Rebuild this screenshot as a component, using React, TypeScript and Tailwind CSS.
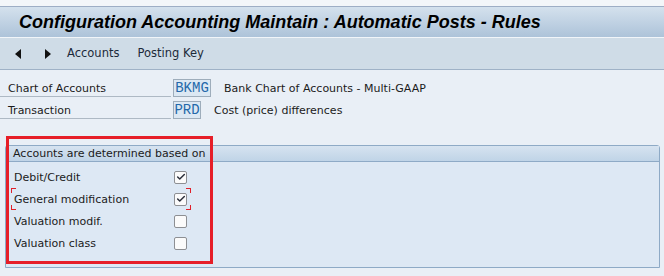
import { Check } from 'lucide-react'

const font = 'font-["DejaVu_Sans",Verdana,sans-serif]'

function Checkbox({ checked }: { checked: boolean }) {
  return (
    <div className="flex h-[13px] w-[13px] items-center justify-center rounded-[2px] border border-[#8d8f93] bg-[#fbfbfb]">
      {checked && <Check className="h-[10px] w-[10px] text-[#2b2f3a]" strokeWidth={3.5} />}
    </div>
  )
}

function FieldRow({ label, value, width, text }: { label: string; value: string; width: string; text: string }) {
  return (
    <div className="flex h-[18px] items-stretch">
      <div className="flex w-[171px] items-center border-b border-[#aeb9c4] pl-[8px] pt-[3px] text-[11px] text-[#1b1b1b]">
        {label}
      </div>
      <div
        className={`ml-[2px] flex items-center justify-center border border-[#9eadbb] bg-[#dce8f3] font-["Liberation_Mono",monospace] text-[14px] text-[#2468aa] ${width}`}
      >
        {value}
      </div>
      <div className="ml-[13px] flex items-center pt-[2px] text-[11px] text-[#1b1b1b]">{text}</div>
    </div>
  )
}

const options = [
  { label: 'Debit/Credit', checked: true },
  { label: 'General modification', checked: true, focused: true },
  { label: 'Valuation modif.', checked: false },
  { label: 'Valuation class', checked: false },
]

export default function App() {
  return (
    <div className={`relative h-[276px] w-[664px] overflow-hidden bg-[#e9eff6] ${font}`}>
      <div className="h-[6px] bg-[#f3f6f9]" />
      <div className="h-px bg-[#9eaec5]" />
      <div className="flex h-[30px] items-center bg-gradient-to-b from-[#d4e1ed] to-[#adc3d9] pl-[19px] font-['Liberation_Sans',Arial,sans-serif] text-[18px] font-bold italic text-black">
        Configuration Accounting Maintain : Automatic Posts - Rules
      </div>
      <div className="h-px bg-[#f1f5f9]" />
      <div className="flex h-[31px] items-center bg-[#cfdce7] text-[11.5px] text-[#1c2a3a]">
        <svg width="7" height="10" viewBox="0 0 7 10" className="ml-[15px]">
          <path d="M6 0 L0 5 L6 10 Z" fill="#111" />
        </svg>
        <svg width="7" height="10" viewBox="0 0 7 10" className="ml-[22px]">
          <path d="M1 0 L7 5 L1 10 Z" fill="#111" />
        </svg>
        <span className="ml-[16px]">Accounts</span>
        <span className="ml-[18px]">Posting Key</span>
      </div>
      <div className="h-px bg-[#9fb2c7]" />

      <div className="flex flex-col gap-[4px] pt-[9px]">
        <FieldRow label="Chart of Accounts" value="BKMG" width="w-[38px]" text="Bank Chart of Accounts - Multi-GAAP" />
        <FieldRow label="Transaction" value="PRD" width="w-[28px]" text="Cost (price) differences" />
      </div>

      <div className="ml-[5px] mt-[26px] h-[123px] w-[655px] rounded-t-[3px] border border-[#8eaac6] bg-[#dde8f4]">
        <div className="flex h-[16px] items-center border-b border-[#8eaac6] bg-gradient-to-b from-[#d6e3f0] to-[#c0d4e7] pl-[7px] pt-px text-[11px] text-[#1b1b1b]">
          Accounts are determined based on
        </div>
        <div className="flex flex-col pt-[4px]">
          {options.map((o) => (
            <div key={o.label} className="relative flex h-[22px] items-center">
              <span className="w-[168px] pl-[8px] pt-[2px] text-[11px] text-[#1b1b1b]">{o.label}</span>
              <Checkbox checked={o.checked} />
              {o.focused && (
                <>
                  <div className="absolute left-[5px] top-0 h-[5px] w-[5px] border-l border-t border-[#e0202a]" />
                  <div className="absolute bottom-0 left-[5px] h-[5px] w-[5px] border-b border-l border-[#e0202a]" />
                  <div className="absolute left-[180px] top-0 h-[5px] w-[5px] border-r border-t border-[#e0202a]" />
                  <div className="absolute bottom-0 left-[180px] h-[5px] w-[5px] border-b border-r border-[#e0202a]" />
                </>
              )}
            </div>
          ))}
        </div>
      </div>

      <div className="absolute left-[6px] top-[136px] h-[128px] w-[207px] border-[3px] border-[#e61e28]" />
    </div>
  )
}
